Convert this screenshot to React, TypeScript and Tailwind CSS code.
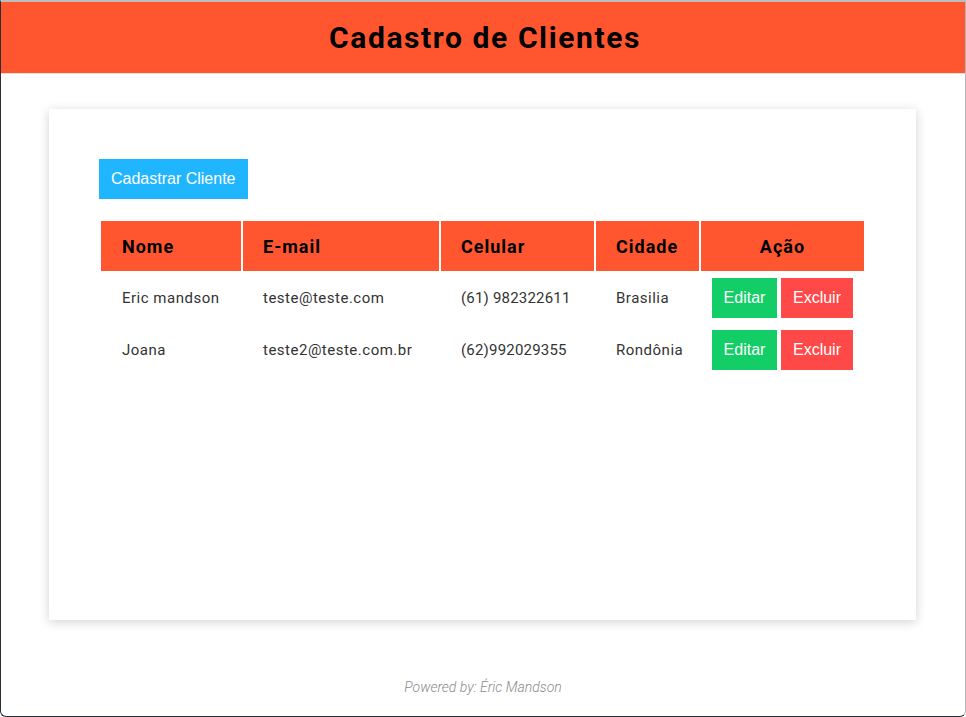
const clientes = [
  { nome: "Eric mandson", email: "teste@teste.com", celular: "(61) 982322611", cidade: "Brasilia" },
  { nome: "Joana", email: "teste2@teste.com.br", celular: "(62)992029355", cidade: "Rondônia" },
];

const font = "font-['Roboto','Liberation_Sans',sans-serif]";

export default function App() {
  return (
    <div className="w-[966px] h-[717px] flex flex-col bg-white border-t-2 border-t-[#bdbdbd] border-l border-l-[#2b2f33] border-r border-r-[#b5b5b5] border-b border-b-[#2b2f33] rounded-b-[6px] overflow-hidden">
      {/* Header */}
      <header className="h-[72px] shrink-0 bg-[#ff5630] border-b border-[#e3e3e3] flex items-center justify-center">
        <h1 className={`${font} text-[30px] font-bold text-black tracking-[1.6px] pl-1`}>Cadastro de Clientes</h1>
      </header>

      {/* Card */}
      <main className="ml-12 mr-[49px] mt-[35px] h-[511px] bg-white shadow-[0_2px_10px_rgba(0,0,0,0.18)] px-[50px] pt-[50px]">
        <button className="h-10 px-3 bg-[#1fb6ff] text-white text-[16px] font-['Liberation_Sans',Arial,sans-serif]">
          Cadastrar Cliente
        </button>

        <table className={`${font} mt-5 w-full border-separate border-spacing-[2px]`}>
          <thead>
            <tr className="h-[50px] bg-[#ff5630] text-black text-[18px] font-bold tracking-[1px]">
              <th className="w-[140px] text-left pl-[21px]">Nome</th>
              <th className="w-[196px] text-left pl-5">E-mail</th>
              <th className="w-[153px] text-left pl-5">Celular</th>
              <th className="w-[103px] text-left pl-5">Cidade</th>
              <th className="text-center">Ação</th>
            </tr>
          </thead>
          <tbody>
            {clientes.map((c) => (
              <tr key={c.email} className="h-[50px] text-[15px] text-[#333] tracking-[0.5px]">
                <td className="pl-[21px]">{c.nome}</td>
                <td className="pl-5">{c.email}</td>
                <td className="pl-5 tracking-[0.2px]">{c.celular}</td>
                <td className="pl-5">{c.cidade}</td>
                <td className="text-center">
                  <div className="flex justify-center gap-1 font-['Liberation_Sans',Arial,sans-serif] tracking-normal">
                    <button className="h-10 w-[65px] bg-[#13ce66] text-white text-[16px]">Editar</button>
                    <button className="h-10 w-[72px] bg-[#ff4949] text-white text-[16px]">Excluir</button>
                  </div>
                </td>
              </tr>
            ))}
          </tbody>
        </table>
      </main>

      {/* Footer */}
      <footer className={`${font} mt-[57px] text-center text-[14px] italic font-light text-[#8a8a8a]`}>
        Powered by: Éric Mandson
      </footer>
    </div>
  );
}
